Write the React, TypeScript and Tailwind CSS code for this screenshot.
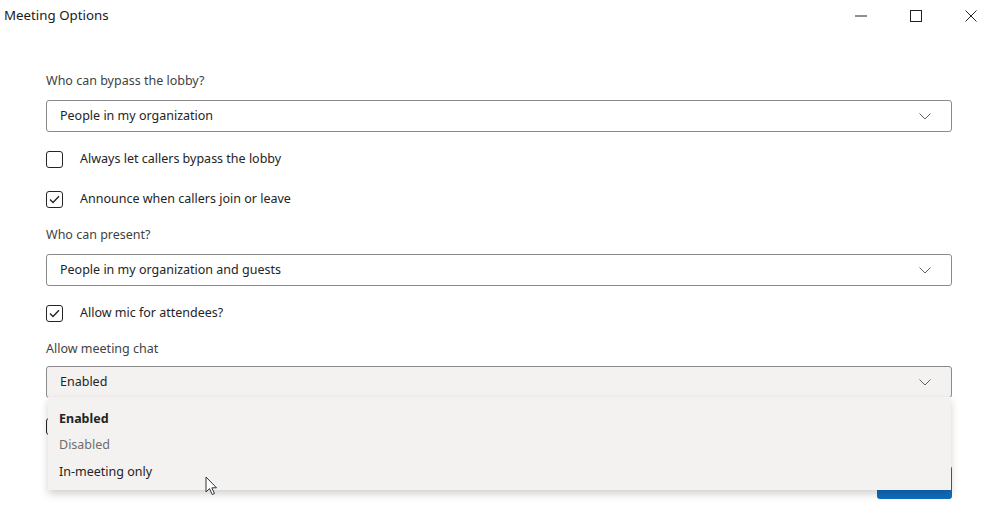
import { useState } from 'react';

function Chevron() {
  return (
    <svg width="12" height="7" viewBox="0 0 12 7" fill="none" className="shrink-0">
      <path d="M0.5 0.5L6 6L11.5 0.5" stroke="#616161" strokeWidth="1" />
    </svg>
  );
}

function Checkbox({ checked, label }: { checked: boolean; label?: string }) {
  return (
    <div className="flex items-center h-5">
      <div className="w-[17px] h-[17px] rounded-[3px] border border-[#242424] flex items-center justify-center bg-white">
        {checked && (
          <svg width="11" height="9" viewBox="0 0 11 9" fill="none">
            <path d="M1 4.5L4 7.5L10 1.2" stroke="#242424" strokeWidth="1.4" />
          </svg>
        )}
      </div>
      {label && <span className="ml-[17px] text-[12.5px] text-[#242424]">{label}</span>}
    </div>
  );
}

function Select({ value, open }: { value: string; open?: boolean }) {
  return (
    <div
      className={`h-[32px] rounded-[3px] border border-[#8a8a8a] flex items-center justify-between pl-[13px] pr-[20px] pt-[1px] text-[12.5px] text-[#242424] ${
        open ? 'bg-[#f3f2f1]' : 'bg-white'
      }`}
    >
      <span>{value}</span>
      <Chevron />
    </div>
  );
}

export default function App() {
  const [chat] = useState('Enabled');
  const options = ['Enabled', 'Disabled', 'In-meeting only'];

  return (
    <div className="w-[998px] h-[527px] bg-white relative overflow-hidden" style={{ fontFamily: '"Noto Sans", "Open Sans", sans-serif' }}>
      {/* Title bar */}
      <div className="h-[32px] flex items-center justify-between">
        <span className="pl-[4px] text-[13.3px] text-[#1a1a1a]">Meeting Options</span>
        <div className="flex items-center h-full">
          <div className="w-[55px] h-full flex items-center justify-center">
            <svg width="12" height="2" viewBox="0 0 12 2"><path d="M0 1H12" stroke="#222" strokeWidth="1" /></svg>
          </div>
          <div className="w-[55px] h-full flex items-center justify-center">
            <svg width="12" height="12" viewBox="0 0 12 12"><rect x="0.5" y="0.5" width="11" height="11" fill="none" stroke="#222" strokeWidth="1" /></svg>
          </div>
          <div className="w-[55px] h-full flex items-center justify-center">
            <svg width="12" height="12" viewBox="0 0 12 12"><path d="M0.5 0.5L11.5 11.5M11.5 0.5L0.5 11.5" stroke="#222" strokeWidth="1" /></svg>
          </div>
        </div>
      </div>

      {/* Form */}
      <div className="pl-[46px] pr-[46px] flex flex-col">
        <div className="mt-[39px] h-5 flex items-center text-[12.5px] text-[#424242]">Who can bypass the lobby?</div>
        <div className="mt-[9px]">
          <Select value="People in my organization" />
        </div>
        <div className="mt-[17px]">
          <Checkbox checked={false} label="Always let callers bypass the lobby" />
        </div>
        <div className="mt-[20px]">
          <Checkbox checked label="Announce when callers join or leave" />
        </div>
        <div className="mt-[16px] h-5 flex items-center text-[12.5px] text-[#424242]">Who can present?</div>
        <div className="mt-[9px]">
          <Select value="People in my organization and guests" />
        </div>
        <div className="mt-[17px]">
          <Checkbox checked label="Allow mic for attendees?" />
        </div>
        <div className="mt-[16px] h-5 flex items-center text-[12.5px] text-[#424242]">Allow meeting chat</div>
        <div className="mt-[7px] relative z-10">
          <Select value={chat} open />
          {/* Open menu */}
          <div className="absolute left-[2px] right-[1px] top-[31px] h-[93px] bg-[#f3f2f1] shadow-[0_4px_8px_rgba(0,0,0,0.18)] flex flex-col pt-[9px]">
            {options.map((o) => (
              <div
                key={o}
                className={`h-[26.5px] flex items-center pl-[11px] text-[12.5px] ${
                  o === chat ? 'font-bold text-[#242424]' : o === 'Disabled' ? 'text-[#6e6e6e]' : 'text-[#242424]'
                }`}
              >
                {o}
              </div>
            ))}
          </div>
        </div>
        <div className="mt-[18px]">
          <Checkbox checked={false} />
        </div>
        <div className="mt-[30px] flex justify-end">
          <button className="w-[75px] h-[33px] rounded-[3px] bg-[#0f6cbd]" aria-label="Save" />
        </div>
      </div>

      {/* Mouse cursor */}
      <svg className="absolute left-[205px] top-[476px] z-20" width="14" height="20" viewBox="0 0 14 20">
        <path d="M1 1V16L4.5 12.5L7.2 18.5L9.5 17.5L6.8 11.8H11.5Z" fill="#fff" stroke="#333" strokeWidth="1" strokeLinejoin="round" />
      </svg>
    </div>
  );
}
